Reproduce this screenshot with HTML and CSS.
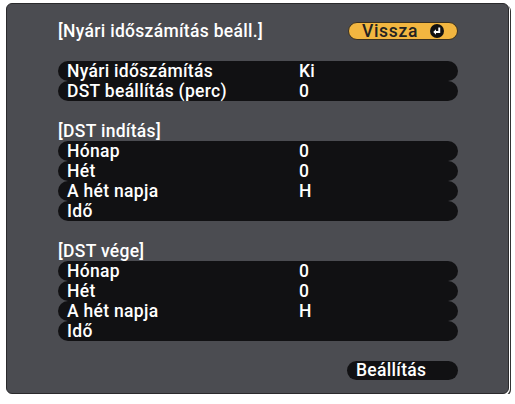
FILE: index.html
```html
<!DOCTYPE html>
<html lang="hu">
<head>
    <meta charset="UTF-8">
    <meta name="viewport" content="width=device-width, initial-scale=1.0">
    <title>Nyári időszámítás beáll.</title>
    <link rel="stylesheet" href="styles.css">
</head>
<body>
    <div class="panel">
        <div class="header">
            <span class="title">[Nyári időszámítás beáll.]</span>
            <span class="btn-back">Vissza
                <svg class="enter" width="14" height="14" viewBox="0 0 13 13">
                    <circle cx="6.5" cy="6.5" r="6.5" fill="#111"/>
                    <path d="M8.6 3.2 V7.4 H4.6" fill="none" stroke="#fff" stroke-width="1.8"/>
                    <path d="M5.6 4.9 L3 7.4 L5.6 9.9 Z" fill="#fff"/>
                </svg>
            </span>
        </div>

        <div class="group">
            <div class="row"><span class="name">Nyári időszámítás</span><span class="value">Ki</span></div>
            <div class="row"><span class="name">DST beállítás (perc)</span><span class="value">0</span></div>
        </div>

        <div class="section">[DST indítás]</div>
        <div class="group">
            <div class="row"><span class="name">Hónap</span><span class="value">0</span></div>
            <div class="row"><span class="name">Hét</span><span class="value">0</span></div>
            <div class="row"><span class="name">A hét napja</span><span class="value">H</span></div>
            <div class="row"><span class="name">Idő</span><span class="value"></span></div>
        </div>

        <div class="section">[DST vége]</div>
        <div class="group">
            <div class="row"><span class="name">Hónap</span><span class="value">0</span></div>
            <div class="row"><span class="name">Hét</span><span class="value">0</span></div>
            <div class="row"><span class="name">A hét napja</span><span class="value">H</span></div>
            <div class="row"><span class="name">Idő</span><span class="value"></span></div>
        </div>

        <div class="footer">
            <span class="btn-set">Beállítás</span>
        </div>
    </div>
</body>
</html>
```

FILE: styles.css
```css
body {
    margin: 0;
    background-color: #fff;
    font-family: Roboto, "Liberation Sans", Arial, sans-serif;
    font-weight: 500;
    font-size: 17.5px;
    letter-spacing: 0.3px;
    color: #fff;
}
.panel {
    margin: 3px 0 0 6px;
    width: 503px;
    height: 391px;
    padding: 17px 0 0 51px;
    box-sizing: border-box;
    background-color: #4b4c51;
    border: 1px solid #2a2a2c;
    border-radius: 6px;
    box-shadow: 1px 1px 0 #fff, 2px 2px 0 #333;
}
.header {
    display: flex;
    justify-content: space-between;
    align-items: center;
    width: 400px;
    height: 20px;
    margin-bottom: 20px;
}
.title {
    line-height: 20px;
}
.btn-back {
    display: flex;
    align-items: center;
    justify-content: center;
    gap: 12px;
    width: 110px;
    height: 18px;
    box-sizing: border-box;
    background-color: #f2b640;
    color: #222;
    border: 1px solid #3a3020;
    border-radius: 9px;
    line-height: 16px;
    letter-spacing: 0.7px;
}
.enter {
    display: block;
}
.group {
    width: 400px;
}
.row {
    display: flex;
    height: 20px;
    line-height: 20px;
    background-color: #111113;
    border-radius: 10px;
    padding-left: 9px;
}
.name {
    width: 232px;
}
.section {
    height: 20px;
    line-height: 20px;
    margin-top: 20px;
}
.footer {
    display: flex;
    justify-content: flex-end;
    width: 400px;
    margin-top: 20px;
}
.btn-set {
    width: 111px;
    height: 19px;
    line-height: 19px;
    padding-left: 9px;
    box-sizing: border-box;
    background-color: #111113;
    border-radius: 10px;
}
```
